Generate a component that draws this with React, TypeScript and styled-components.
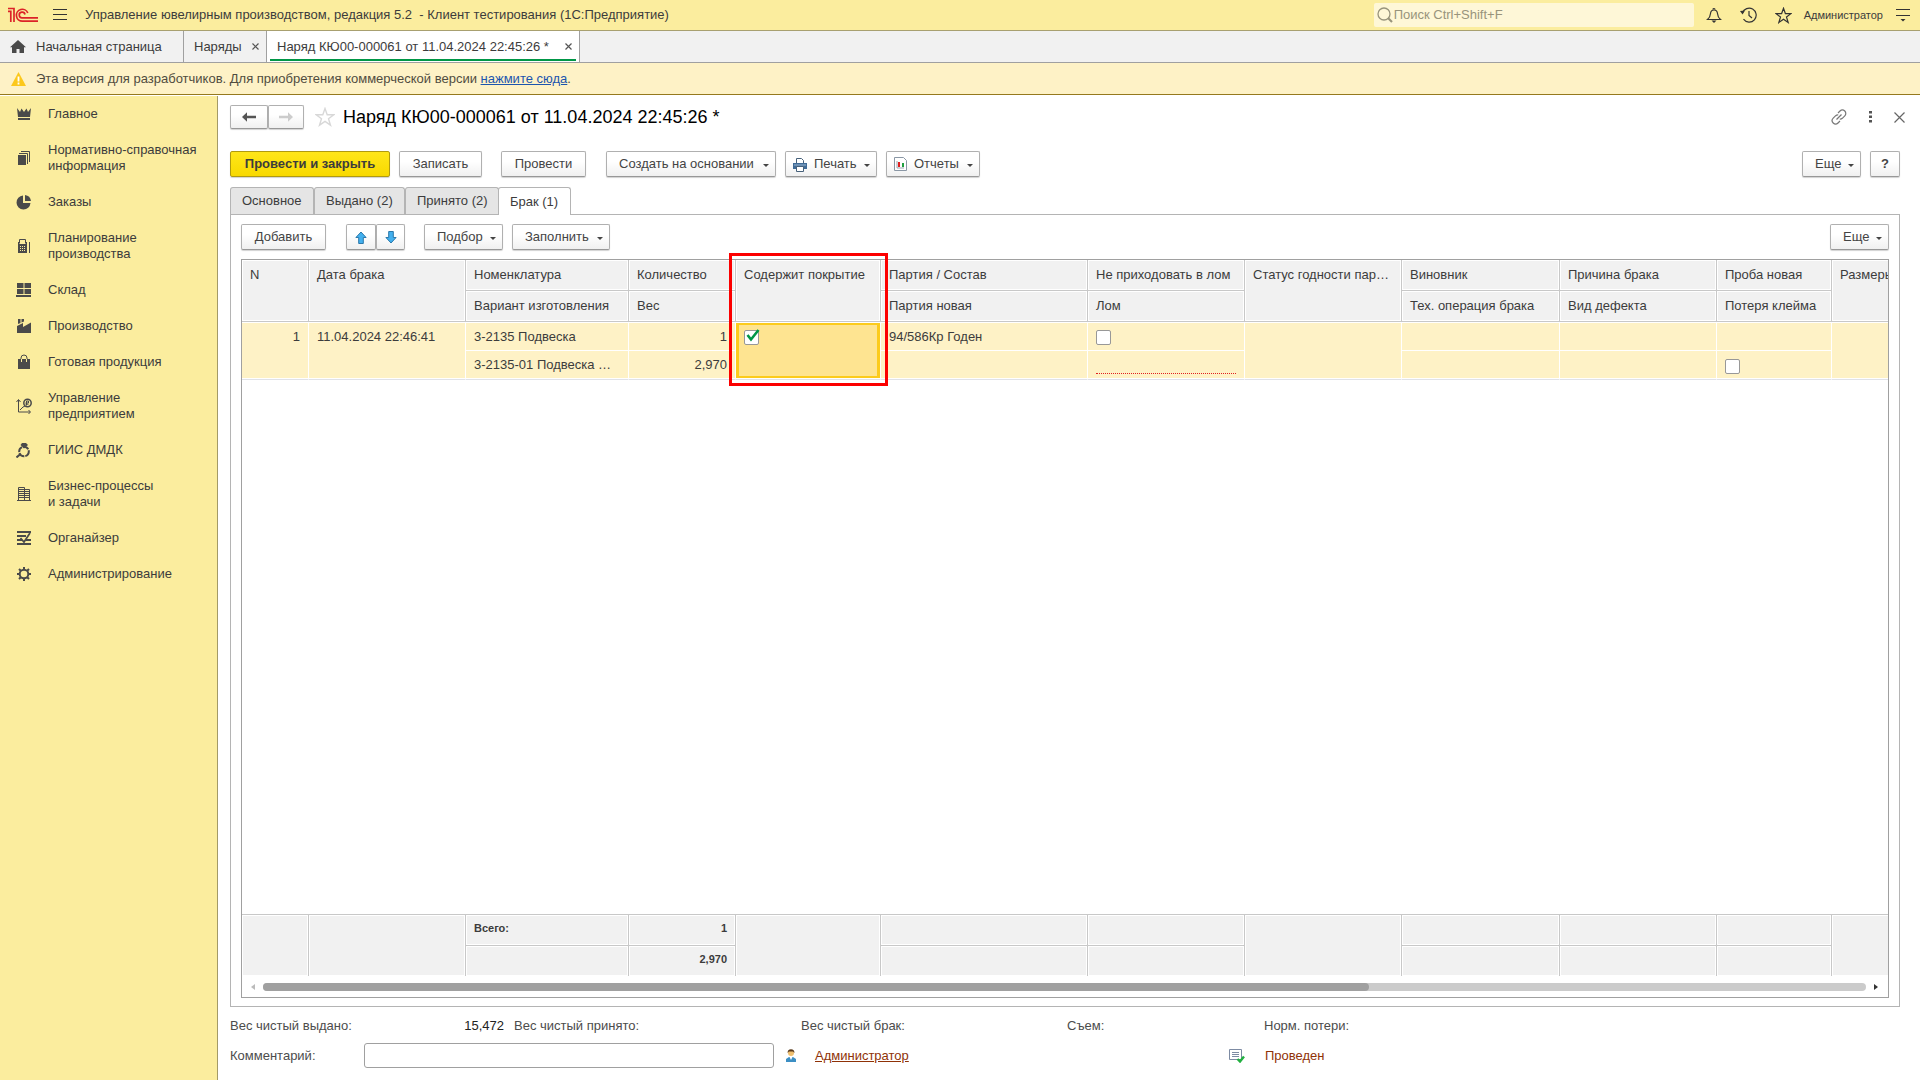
import React from "react";
import styled, { createGlobalStyle, css } from "styled-components";

const ink = "#3c3c3c";
const line = "#a0a0a0";
const cellLine = "#c8c8c8";

const GlobalStyle = createGlobalStyle`
  *, *::before, *::after { box-sizing: border-box; }
  body { margin: 0; background: #fff; }
  body, button, input { font: 13px/16px "Liberation Sans", Arial, sans-serif; color: ${ink}; }
  button { padding: 0; background: none; border: 0; cursor: pointer; white-space: nowrap; }
  svg { display: block; flex: none; }
`;

const Page = styled.div`
  display: flex;
  flex-direction: column;
  min-height: 100vh;
`;

/* ---------- top bar ---------- */

const TopBar = styled.header`
  display: flex;
  align-items: center;
  height: 31px;
  padding: 0 10px 0 8px;
  background: #fbed9e;
  border-bottom: 1px solid #a8a070;
`;

const AppTitle = styled.span`
  flex: 1;
  margin-left: 18px;
  white-space: pre;
`;

const MenuButton = styled.button`
  margin-left: 15px;
`;

const SearchBox = styled.label`
  display: flex;
  align-items: center;
  gap: 1px;
  width: 320px;
  height: 24px;
  margin-right: 12px;
  padding-left: 3px;
  background: #fef7d7;
  border-radius: 2px;
`;

const SearchInput = styled.input`
  flex: 1;
  min-width: 0;
  padding: 0;
  background: none;
  border: 0;
  outline: 0;
  &::placeholder { color: #98947c; opacity: 1; }
`;

const TopIcons = styled.div`
  display: flex;
  align-items: center;
  gap: 18px;
`;

const UserName = styled.button`
  margin: 0 13px 0 12px;
  font-size: 11px;
`;

/* ---------- open windows ---------- */

const WindowTabs = styled.nav`
  display: flex;
  height: 32px;
  background: #f1f1f1;
  border-bottom: 1px solid ${line};
`;

const WindowTab = styled.div<{ $w: number; $active?: boolean }>`
  display: flex;
  align-items: center;
  justify-content: space-between;
  width: ${(p) => p.$w}px;
  padding: 0 7px 0 10px;
  border-right: 1px solid ${line};
  ${(p) =>
    p.$active &&
    css`
      background: linear-gradient(#009646, #009646) center bottom 1px / calc(100% - 6px) 2px no-repeat #fff;
    `}
`;

const TabLabel = styled.button`
  display: flex;
  align-items: center;
  gap: 10px;
`;

/* ---------- developer notice ---------- */

const Notice = styled.div`
  display: flex;
  align-items: center;
  height: 32px;
  padding-left: 11px;
  background: #fef2c6;
  border-bottom: 1px solid #95791d;
`;

const NoticeText = styled.p`
  margin: 0 0 0 10px;
  color: #504c40;
`;

const NoticeLink = styled.a`
  color: #1c55ae;
`;

/* ---------- section panel ---------- */

const Body = styled.div`
  display: flex;
  flex: 1;
`;

const Sidebar = styled.nav`
  width: 218px;
  flex: none;
  margin-top: 1px;
  background: #fbed9e;
  border-right: 1px solid #a39a67;
`;

const Section = styled.a`
  display: grid;
  grid-template-columns: 16px 1fr;
  align-items: center;
  column-gap: 16px;
  padding: 10px 12px 10px 16px;
  color: ${ink};
  text-decoration: none;
  white-space: pre-line;
`;

/* ---------- document form ---------- */

const Main = styled.main`
  display: flex;
  flex-direction: column;
  flex: 1;
  min-width: 0;
  padding: 10px 20px 12px 12px;
`;

const TitleRow = styled.div`
  display: flex;
  align-items: center;
  height: 24px;
`;

const Title = styled.h1`
  flex: 1;
  margin: 0;
  font-size: 18px;
  line-height: 24px;
  font-weight: 400;
  color: #000;
`;

const StarButton = styled.button`
  margin: 0 8px 0 11px;
`;

const FormTools = styled.div`
  display: flex;
  align-items: center;
  gap: 22px;
  margin-right: -5px;
`;

const Toolbar = styled.div`
  display: flex;
  gap: 9px;
`;

const FormToolbar = styled(Toolbar)`
  margin-top: 22px;
`;

const Group = styled.div<{ $before?: number; $after?: number }>`
  display: flex;
  margin-left: ${(p) => p.$before || 0}px;
  margin-right: ${(p) => p.$after || 0}px;
`;

const Spacer = styled.span`
  flex: 1;
`;

const Button = styled.button<{ $w: number; $primary?: boolean; $menu?: boolean; $icon?: boolean }>`
  display: flex;
  align-items: center;
  justify-content: ${(p) => (p.$menu ? "flex-start" : "center")};
  width: ${(p) => p.$w}px;
  height: 26px;
  padding: 0 ${(p) => (p.$menu ? 6 : 0)}px 0 ${(p) => (p.$icon ? 7 : p.$menu ? 12 : 0)}px;
  color: #444;
  background: linear-gradient(#fff 40%, #f0f0f0);
  border: 1px solid #b0b0b0;
  border-bottom-color: #989898;
  border-radius: 2px;
  box-shadow: 0 1px 1px rgba(0, 0, 0, 0.18);
  ${Group} & + & { border-left: 0; border-radius: 0 2px 2px 0; }
  ${(p) =>
    p.$primary &&
    css`
      color: ${ink};
      font-weight: 700;
      background: linear-gradient(#ffe61a, #f8d900);
      border-color: #b09a10;
    `}
`;

const NavButton = styled(Button)`
  height: 24px;
`;

const Caret = styled.i`
  margin: 3px 0 0 auto;
  border: 3px solid transparent;
  border-top-color: #444;
  border-bottom: 0;
`;

const ButtonIcon = styled.span`
  margin-right: 7px;
`;

const PageTabs = styled.div`
  display: flex;
  margin-top: 10px;
`;

const PageTab = styled.button<{ $w: number; $active?: boolean }>`
  width: ${(p) => p.$w}px;
  height: 27px;
  padding-left: 11px;
  text-align: left;
  background: ${(p) => (p.$active ? "#fff" : "#e5e5e5")};
  border: 1px solid #b4b4b4;
  border-bottom: 0;
  border-radius: 3px 3px 0 0;
  & + & { border-left: ${(p) => (p.$active ? "1px solid #b4b4b4" : "0")}; }
  ${(p) => p.$active && css`height: 28px; margin-bottom: -1px; margin-left: -1px; z-index: 1;`}
`;

const Panel = styled.section`
  display: flex;
  flex-direction: column;
  flex: 1;
  padding: 9px 10px 8px;
  border: 1px solid #b4b4b4;
`;

const Frame = styled.div`
  position: relative;
  display: flex;
  flex-direction: column;
  flex: 1;
  margin-top: 9px;
  border: 1px solid ${line};
`;

const Clip = styled.div`
  overflow: hidden;
`;

const Grid = styled.table`
  width: 1747px;
  table-layout: fixed;
  border-collapse: separate;
  border-spacing: 0;
`;

const cell = css`
  padding: 0 8px;
  overflow: hidden;
  text-overflow: ellipsis;
  white-space: nowrap;
  vertical-align: top;
`;

const Head = styled.th`
  ${cell}
  height: 31px;
  line-height: 30px;
  font-weight: 400;
  text-align: left;
  background: #f1f1f1;
  border: solid ${cellLine};
  border-width: 0 1px 1px 0;
  box-shadow: inset 0 0 0 1px #fff;
`;

const Cell = styled.td<{ $right?: boolean; $current?: boolean; $last?: boolean; $tall?: boolean }>`
  ${cell}
  height: 29px;
  line-height: 27px;
  text-align: ${(p) => (p.$right ? "right" : "left")};
  background: #fef2c6;
  border-right: 1px solid #fff;
  border-bottom: 1px solid ${(p) => (p.$last || p.$tall ? "#e0e2e8" : "#fff")};
  box-shadow: inset 0 ${(p) => (p.$last ? -1 : 1)}px #fff${(p) => (p.$tall ? ", inset 0 -1px #fff" : "")};
  padding-top: ${(p) => (p.$last ? 0 : 1)}px;
  ${(p) =>
    p.$current &&
    css`
      background: #fee491;
      box-shadow: inset 0 1px #fff, inset 0 -1px #fff, inset 0 0 0 3px #fccb1c;
    `}
`;

const Total = styled.td`
  ${cell}
  height: 31px;
  line-height: 27px;
  font-size: 11px;
  font-weight: 700;
  text-align: right;
  background: #f1f1f1;
  border: solid ${cellLine};
  border-width: 1px 1px 0 0;
  box-shadow: inset 0 0 0 1px #fff;
`;

const TotalLabel = styled(Total)`
  text-align: left;
`;

const Required = styled.span`
  display: block;
  height: 23px;
  border-bottom: 1px dotted #e02020;
`;

const CheckWrap = styled.span<{ $low?: boolean }>`
  display: grid;
  width: 16px;
  height: 15px;
  margin-top: ${(p) => (p.$low ? 8 : 7)}px;
  > * { grid-area: 1 / 1; }
`;

const CheckInput = styled.input`
  appearance: none;
  width: 15px;
  height: 15px;
  margin: 0;
  background: #fff;
  border: 1px solid #989898;
  border-radius: 2px;
`;

const Tick = styled.svg`
  margin: -1px 0 0 2px;
  pointer-events: none;
`;

const Highlight = styled.div`
  position: absolute;
  left: 487px;
  top: -7px;
  width: 159px;
  height: 133px;
  border: 3px solid #fc0000;
  pointer-events: none;
`;

const Fill = styled.div`
  flex: 1;
`;

const ScrollRow = styled.div`
  display: flex;
  align-items: center;
  justify-content: space-between;
  height: 21px;
  padding: 0 10px 0 9px;
`;

const Track = styled.div`
  flex: 1;
  height: 8px;
  margin: 0 8px;
  background: #cbcbcb;
  border-radius: 4px;
`;

const Thumb = styled.div`
  width: 69%;
  height: 100%;
  background: #a0a0a0;
  border-radius: 4px;
`;

/* ---------- document footer ---------- */

const Summary = styled.div`
  display: grid;
  grid-template-columns: 274px 277px 256px 187px 1fr;
  column-gap: 10px;
  margin-top: 11px;
  color: #4c4c4c;
`;

const SummaryItem = styled.div`
  display: flex;
  justify-content: space-between;
`;

const SummaryValue = styled.span`
  color: #222;
`;

const Footer = styled.div`
  display: grid;
  grid-template-columns: 134px 410px 41px 414px 36px 1fr;
  align-items: center;
  margin-top: 9px;
`;

const FooterLabel = styled.label`
  color: #4c4c4c;
`;

const Comment = styled.input`
  height: 25px;
  padding: 0 6px;
  border: 1px solid ${line};
  border-radius: 3px;
`;

const IconSlot = styled.span`
  padding-left: 12px;
`;

const AuthorLink = styled.a`
  color: #8f3207;
`;

const Status = styled.span`
  color: #8f3207;
`;

/* ---------- icons ---------- */

const Svg = ({ w = 16, h = w, children, ...rest }: any) => (
  <svg width={w} height={h} viewBox={`0 0 ${w} ${h}`} fill="none" aria-hidden="true" {...rest}>
    {children}
  </svg>
);

const g = "#4a4a4a";

const Logo = () => (
  <Svg w={30} h={16} stroke="#dc2328" strokeWidth={1.7}>
    <path d="M0 4.300h2.800V15M0 1.500h6V15" />
    <path d="M19.800 6A5.900 5.900 0 1 0 14.500 14.100H30" />
    <path d="M17 7.500A2.900 2.900 0 1 0 14.500 10.900H30" />
  </Svg>
);

const Cross = ({ size = 7, color = "#555" }: { size?: number; color?: string }) => (
  <Svg w={size} stroke={color} strokeWidth={1.2}>
    <path d={`M.5.5l${size - 1} ${size - 1}M${size - 0.5}.5l-${size - 1} ${size - 1}`} />
  </Svg>
);

const Star = ({ color, size }: { color: string; size: number }) => (
  <svg width={size} height={size} viewBox="0 0 20 20" fill="none" stroke={color} strokeWidth={1.4} aria-hidden="true">
    <path d="M10 1.500l2.200 6.200 6.600.1-5.300 4 2 6.400L10 14.400l-5.500 3.800 2-6.400-5.300-4 6.600-.1z" />
  </svg>
);

const Arrow = ({ color, flip }: { color: string; flip?: boolean }) => (
  <Svg w={14} h={10} fill={color}>
    <path d={flip ? "M14 5 9 .3v3.500H0v2.400h9v3.500z" : "M0 5 5 .3v3.500h9v2.400H5v3.500z"} />
  </Svg>
);

const MoveArrow = ({ down }: { down?: boolean }) => (
  <Svg w={12} h={13} fill="#43b0ee" stroke="#2a78ab">
    <path d={down ? "M6 12 .9 6.500h2.800v-6h4.600v6h2.800z" : "M6 1 .9 6.500h2.800v6h4.600v-6h2.800z"} />
  </Svg>
);

const sectionIcons: Record<string, React.ReactNode> = {
  crown: (
    <Svg fill={g}>
      <path d="M1 2l3 4 1.500-3.500L8 6l2.500-3.500L12 6l3-4-1 9H2z" />
      <path d="M2 12h12v2H2z" />
    </Svg>
  ),
  books: (
    <Svg>
      <path d="M2 5h8v10H2z" fill={g} />
      <path d="M3 3.500h8.500V14M5 1.500h8.500V12" stroke={g} />
    </Svg>
  ),
  pie: (
    <Svg fill={g}>
      <path d="M7 1.500V9h7.500A7 7 0 1 1 7 1.500z" />
      <path d="M9 1a7 7 0 0 1 6 6H9z" />
    </Svg>
  ),
  calc: (
    <Svg>
      <path d="M3.500 5.500v-4h6v4" stroke={g} />
      <path d="M2 4h1v2h7V4h1v11H2zM13 4h1v11h-1z" fill={g} />
      <path d="M4 8.500h6M4 10.500h6M4 12.500h6" stroke="#fbed9e" strokeDasharray="1 1" />
    </Svg>
  ),
  store: (
    <Svg fill={g}>
      <path d="M1 1h6.500v5H1zM8.500 1H15v5H8.500zM1 7h6.500v5H1zM8.500 7H15v5H8.500zM0 13h15v2H0z" />
    </Svg>
  ),
  factory: (
    <Svg fill={g}>
      <path d="M2 1h2.500v4L2 6zM5.500 1H8v2.500l-2.500 1z" />
      <path d="M1 8l6-3v4l8-4.500V15H1z" />
    </Svg>
  ),
  bag: (
    <Svg>
      <path d="M2 5h12v10H2z" fill={g} />
      <path d="M5 8V4a3 3 0 0 1 6 0v4" stroke={g} />
      <path d="M5.500 5v3M10.500 5v3" stroke="#fbed9e" />
    </Svg>
  ),
  chart: (
    <Svg stroke={g}>
      <path d="M2.500 2v12H14M.5 4l2-2.500 2 2.500M12.500 12l2 2-2 2M4 12l3-3 2-1" />
      <circle cx={11.500} cy={5} r={3.700} strokeWidth={1.500} />
      <path d="M10.500 7.500V3h2v2h-3M9.500 6.200h3" />
    </Svg>
  ),
  ring: (
    <Svg>
      <circle cx={8} cy={9.500} r={4.800} stroke={g} strokeWidth={2} strokeDasharray="6 1" />
      <path d="M6 1h4l2 2-4 3.500L4.500 3z" fill={g} />
      <path d="M.5 15.500l4-3.500" stroke={g} strokeWidth={2} />
    </Svg>
  ),
  building: (
    <Svg stroke={g}>
      <path d="M2.500 15V1.500h6V15M8.500 3.500h5V15M1 14.500h14M3 3.500h5M3 5.500h5M3 7.500h5M3 9.500h5M3 11.500h5M9 5.500h4M9 7.500h4M9 9.500h4M9 11.500h4" />
    </Svg>
  ),
  organizer: (
    <Svg stroke={g} strokeWidth={2}>
      <path d="M1 2h14M1 6h9M1 10h5M10 10h5M1 14h14" />
      <path d="M4.500 8l3.500 4 6-9" strokeWidth={1.700} />
    </Svg>
  ),
  gear: (
    <Svg stroke={g}>
      <circle cx={8} cy={8} r={4.300} strokeWidth={2} />
      <path d="M8 1v2.500M8 12.500V15M1 8h2.500M12.500 8H15M3 3l1.800 1.800M11.200 11.200L13 13M13 3l-1.800 1.800M4.800 11.200L3 13" strokeWidth={2} />
    </Svg>
  ),
};

/* ---------- data ---------- */

const sections: [string, string][] = [
  ["crown", "Главное"],
  ["books", "Нормативно-справочная\nинформация"],
  ["pie", "Заказы"],
  ["calc", "Планирование\nпроизводства"],
  ["store", "Склад"],
  ["factory", "Производство"],
  ["bag", "Готовая продукция"],
  ["chart", "Управление\nпредприятием"],
  ["ring", "ГИИС ДМДК"],
  ["building", "Бизнес-процессы\nи задачи"],
  ["organizer", "Органайзер"],
  ["gear", "Администрирование"],
];

type Column = { w: number; top: string; bottom?: string };

const columns: Column[] = [
  { w: 67, top: "N" },
  { w: 157, top: "Дата брака" },
  { w: 163, top: "Номенклатура", bottom: "Вариант изготовления" },
  { w: 107, top: "Количество", bottom: "Вес" },
  { w: 145, top: "Содержит покрытие" },
  { w: 207, top: "Партия / Состав", bottom: "Партия новая" },
  { w: 157, top: "Не приходовать в лом", bottom: "Лом" },
  { w: 157, top: "Статус годности пар…" },
  { w: 158, top: "Виновник", bottom: "Тех. операция брака" },
  { w: 157, top: "Причина брака", bottom: "Вид дефекта" },
  { w: 115, top: "Проба новая", bottom: "Потеря клейма" },
  { w: 157, top: "Размеры" },
];

const paired = columns.filter((c) => c.bottom);

const Columns = () => (
  <colgroup>
    {columns.map((c) => (
      <col key={c.top} style={{ width: c.w }} />
    ))}
  </colgroup>
);

const Check = ({ label, checked, low }: { label: string; checked?: boolean; low?: boolean }) => (
  <CheckWrap $low={low}>
    <CheckInput type="checkbox" aria-label={label} defaultChecked={checked} />
    {checked && (
      <Tick width="14" height="13" viewBox="0 0 14 13" fill="none" stroke="#009646" strokeWidth="2.600" aria-hidden="true">
        <path d="M1.500 6l3.500 4.500L12.500 1" />
      </Tick>
    )}
  </CheckWrap>
);

const More = () => (
  <Button $w={59} $menu>
    Еще
    <Caret />
  </Button>
);

export default function App() {
  return (
    <Page>
      <GlobalStyle />
      <TopBar>
        <Logo />
        <MenuButton aria-label="Меню">
          <Svg w={14} h={12} stroke="#333">
            <path d="M0 .5h14M0 5.500h14M0 10.500h14" />
          </Svg>
        </MenuButton>
        <AppTitle>Управление ювелирным производством, редакция 5.2  - Клиент тестирования (1С:Предприятие)</AppTitle>
        <SearchBox>
          <Svg w={16} stroke="#98947c" strokeWidth={1.300}>
            <circle cx={7} cy={7} r={6} />
            <path d="M11 11l4 4" strokeWidth={2.200} />
          </Svg>
          <SearchInput placeholder="Поиск Ctrl+Shift+F" aria-label="Поиск" />
        </SearchBox>
        <TopIcons>
          <button aria-label="Оповещения">
            <Svg stroke="#333" strokeWidth={1.200}>
              <path d="M1.500 12.500c2.500-2 2.800-3 3-6 .2-2 1.500-3.500 3.500-3.500s3.300 1.500 3.500 3.500c.2 3 .5 4 3 6z" />
              <path d="M7 2.500a1 1 0 0 1 2 0" />
              <path d="M5.500 13.500h5L8 16z" fill="#333" stroke="none" />
            </Svg>
          </button>
          <button aria-label="История">
            <Svg w={17} h={16} stroke="#333" strokeWidth={1.200}>
              <path d="M2.500 6A7 7 0 1 1 3.500 12.200M9 4v4.500l3 2.500" />
              <path d="M0 4l5-.5-2.500 4z" fill="#333" stroke="none" />
            </Svg>
          </button>
          <button aria-label="Избранное">
            <Star color="#333" size={17} />
          </button>
        </TopIcons>
        <UserName>Администратор</UserName>
        <button aria-label="Настройки">
          <Svg w={14} h={14} stroke="#333">
            <path d="M0 1.500h14M0 7.500h14" />
            <path d="M4.500 11h5L7 13.500z" fill="#333" stroke="none" />
          </Svg>
        </button>
      </TopBar>

      <WindowTabs>
        <WindowTab $w={184}>
          <TabLabel>
            <Svg w={16} h={14} fill={g}>
              <path d="M8 0l8 7.200h-2V13H9.500V9h-3v4H2V7.200H0z" />
            </Svg>
            Начальная страница
          </TabLabel>
        </WindowTab>
        <WindowTab $w={83}>
          <TabLabel>Наряды</TabLabel>
          <button aria-label="Закрыть"><Cross /></button>
        </WindowTab>
        <WindowTab $w={313} $active>
          <TabLabel>Наряд КЮ00-000061 от 11.04.2024 22:45:26 *</TabLabel>
          <button aria-label="Закрыть"><Cross /></button>
        </WindowTab>
      </WindowTabs>

      <Notice>
        <Svg w={15} h={14}>
          <path d="M7.500 0L15 14H0z" fill="#fcc81c" />
          <path d="M7.500 4.500v5M7.500 10.500v2" stroke="#fff" strokeWidth={1.800} />
        </Svg>
        <NoticeText>
          Эта версия для разработчиков. Для приобретения коммерческой версии <NoticeLink href="#">нажмите сюда</NoticeLink>.
        </NoticeText>
      </Notice>

      <Body>
        <Sidebar>
          {sections.map(([icon, name]) => (
            <Section key={name} href="#">
              {sectionIcons[icon]}
              <span>{name}</span>
            </Section>
          ))}
        </Sidebar>

        <Main>
          <TitleRow>
            <Group>
              <NavButton $w={38} aria-label="Назад"><Arrow color="#555" /></NavButton>
              <NavButton $w={36} aria-label="Вперед"><Arrow color="#ccc" flip /></NavButton>
            </Group>
            <StarButton aria-label="В избранное"><Star color="#d8d8d8" size={20} /></StarButton>
            <Title>Наряд КЮ00-000061 от 11.04.2024 22:45:26 *</Title>
            <FormTools>
              <button aria-label="Ссылка">
                <Svg w={16} stroke="#777" strokeWidth={1.200}>
                  <path d="M7 4l2-2a3.200 3.200 0 0 1 4.800 4.800l-2.500 2.500a3.200 3.200 0 0 1-2.500.8M9 12l-2 2a3.200 3.200 0 0 1-4.800-4.800l2.500-2.500a3.200 3.200 0 0 1 2.500-.8M5.500 10.500l5-5" />
                </Svg>
              </button>
              <button aria-label="Другие действия">
                <Svg w={3} h={12} fill="#555">
                  <path d="M0 0h3v2.500H0zM0 4.500h3V7H0zM0 9h3v2.500H0z" />
                </Svg>
              </button>
              <button aria-label="Закрыть форму"><Cross size={11} color="#666" /></button>
            </FormTools>
          </TitleRow>

          <FormToolbar>
            <Button $w={160} $primary>Провести и закрыть</Button>
            <Button $w={83}>Записать</Button>
            <Group $before={10} $after={11}>
              <Button $w={85}>Провести</Button>
            </Group>
            <Button $w={170} $menu>Создать на основании<Caret /></Button>
            <Button $w={92} $menu $icon>
              <ButtonIcon>
                <Svg w={14} h={15}>
                  <path d="M3.500 6V1.500h5l2 2V6" fill="#fff" stroke="#46607a" />
                  <path d="M0 6h14v6H0z" fill="#3f6b97" />
                  <path d="M1 8h12" stroke="#9db8d2" />
                  <path d="M3.500 9.500h7v5h-7z" fill="#fff" stroke="#46607a" />
                </Svg>
              </ButtonIcon>
              Печать<Caret />
            </Button>
            <Button $w={94} $menu $icon>
              <ButtonIcon>
                <Svg w={13} h={14}>
                  <path d="M.5.5h9l3 3v10H.5z" fill="#fff" stroke="#8a97a5" />
                  <path d="M3 4v7h7" stroke="#9aa5b0" />
                  <path d="M4 5h2v5H4z" fill="#e02020" />
                  <path d="M8 6h2v4H8z" fill="#20a040" />
                </Svg>
              </ButtonIcon>
              Отчеты<Caret />
            </Button>
            <Spacer />
            <More />
            <Button $w={30} aria-label="Справка"><b>?</b></Button>
          </FormToolbar>

          <PageTabs role="tablist">
            <PageTab role="tab" $w={84}>Основное</PageTab>
            <PageTab role="tab" $w={91}>Выдано (2)</PageTab>
            <PageTab role="tab" $w={94}>Принято (2)</PageTab>
            <PageTab role="tab" $w={73} $active aria-selected>Брак (1)</PageTab>
          </PageTabs>

          <Panel>
            <Toolbar>
              <Button $w={85}>Добавить</Button>
              <Group $before={11} $after={10}>
                <Button $w={30} aria-label="Вверх"><MoveArrow /></Button>
                <Button $w={29} aria-label="Вниз"><MoveArrow down /></Button>
              </Group>
              <Button $w={79} $menu>Подбор<Caret /></Button>
              <Button $w={98} $menu>Заполнить<Caret /></Button>
              <Spacer />
              <More />
            </Toolbar>

            <Frame>
              <Clip>
                <Grid>
                  <Columns />
                  <thead>
                    <tr>
                      {columns.map((c) => (
                        <Head key={c.top} rowSpan={c.bottom ? 1 : 2}>{c.top}</Head>
                      ))}
                    </tr>
                    <tr>
                      {paired.map((c) => (
                        <Head key={c.bottom}>{c.bottom}</Head>
                      ))}
                    </tr>
                  </thead>
                  <tbody>
                    <tr>
                      <Cell rowSpan={2} $tall $right>1</Cell>
                      <Cell rowSpan={2} $tall>11.04.2024 22:46:41</Cell>
                      <Cell>3-2135 Подвеска</Cell>
                      <Cell $right>1</Cell>
                      <Cell rowSpan={2} $tall $current><Check label="Содержит покрытие" checked /></Cell>
                      <Cell>94/586Кр Годен</Cell>
                      <Cell><Check label="Не приходовать в лом" /></Cell>
                      <Cell rowSpan={2} $tall />
                      <Cell />
                      <Cell />
                      <Cell />
                      <Cell rowSpan={2} $tall />
                    </tr>
                    <tr>
                      <Cell $last>3-2135-01 Подвеска …</Cell>
                      <Cell $last $right>2,970</Cell>
                      <Cell $last />
                      <Cell $last><Required /></Cell>
                      <Cell $last />
                      <Cell $last />
                      <Cell $last><Check label="Потеря клейма" low /></Cell>
                    </tr>
                  </tbody>
                </Grid>
              </Clip>
              <Fill />
              <Clip>
                <Grid>
                  <Columns />
                  <tbody>
                    <tr>
                      {columns.map((c, i) =>
                        i === 2 ? (
                          <TotalLabel key={c.top}>Всего:</TotalLabel>
                        ) : (
                          <Total key={c.top} rowSpan={c.bottom ? 1 : 2}>{i === 3 ? "1" : ""}</Total>
                        )
                      )}
                    </tr>
                    <tr>
                      {paired.map((c, i) => (
                        <Total key={c.top}>{i === 1 ? "2,970" : ""}</Total>
                      ))}
                    </tr>
                  </tbody>
                </Grid>
              </Clip>
              <ScrollRow>
                <Svg w={4} h={6} fill="#bbb"><path d="M4 0v6L0 3z" /></Svg>
                <Track><Thumb /></Track>
                <Svg w={4} h={6} fill="#333"><path d="M0 0v6l4-3z" /></Svg>
              </ScrollRow>
              <Highlight />
            </Frame>
          </Panel>

          <Summary>
            <SummaryItem>Вес чистый выдано:<SummaryValue>15,472</SummaryValue></SummaryItem>
            <SummaryItem>Вес чистый принято:</SummaryItem>
            <SummaryItem>Вес чистый брак:</SummaryItem>
            <SummaryItem>Съем:</SummaryItem>
            <SummaryItem>Норм. потери:</SummaryItem>
          </Summary>
          <Footer>
            <FooterLabel htmlFor="comment">Комментарий:</FooterLabel>
            <Comment id="comment" />
            <IconSlot>
              <Svg w={10} h={13}>
                <path d="M0 13V10l3-2h4l3 2v3z" fill="#3c8fc4" />
                <path d="M3.500 8h3L5 11z" fill="#fff" />
                <circle cx={5} cy={4} r={3} fill="#f0c070" />
                <path d="M1.500 4a3.500 3.800 0 0 1 7 0L7 2.500H3z" fill="#5a3a1c" />
              </Svg>
            </IconSlot>
            <span><AuthorLink href="#">Администратор</AuthorLink></span>
            <Svg w={16} h={14}>
              <path d="M.5.500h12v10H.5z" fill="#fff" stroke="#7d8ba3" />
              <path d="M3 3.500h7M3 5.500h7M3 7.500h7" stroke="#7d8ba3" />
              <path d="M8.500 10l2.500 2.500L15 7.500" stroke="#22b040" strokeWidth={2.400} />
            </Svg>
            <Status>Проведен</Status>
          </Footer>
        </Main>
      </Body>
    </Page>
  );
}
